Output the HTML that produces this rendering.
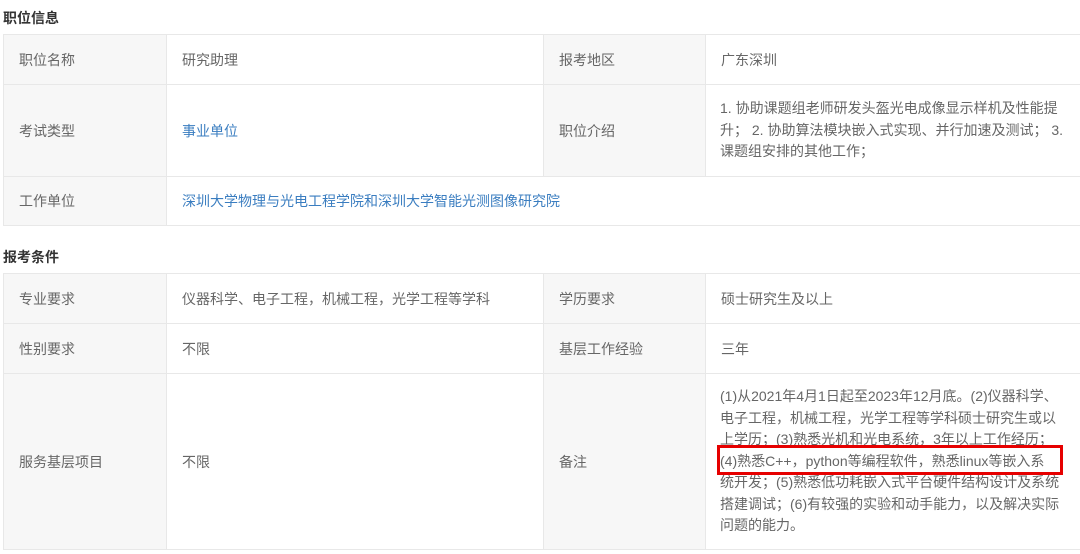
<!DOCTYPE html>
<html><head><meta charset="utf-8"><style>
body{margin:0;background:#fff;font-family:"Liberation Sans","Noto Sans CJK SC",sans-serif;font-size:14px;color:#666;width:1080px;height:554px;overflow:hidden;position:relative}
h3{position:absolute;left:3px;margin:0;font-size:14px;font-weight:bold;color:#333}
table{position:absolute;left:3px;border-collapse:collapse;table-layout:fixed;width:1080px}
td{border:1px solid #e8e8e8;padding:0 0 0 15px;vertical-align:middle}
td.k{background:#f7f7f7}
a{color:#3a7dc0;text-decoration:none}
.n{line-height:21.5px;padding:0 0 0 14px}
.box{position:absolute;left:717px;top:445px;width:340px;height:24px;border:3px solid #e60000}
</style></head><body>
<h3 style="top:8px">职位信息</h3>
<table style="top:34px">
<colgroup><col style="width:163px"><col style="width:377px"><col style="width:162px"><col style="width:378px"></colgroup>
<tr style="height:50px"><td class="k">职位名称</td><td>研究助理</td><td class="k">报考地区</td><td>广东深圳</td></tr>
<tr style="height:92px"><td class="k">考试类型</td><td><a>事业单位</a></td><td class="k">职位介绍</td><td class="n">1. 协助课题组老师研发头盔光电成像显示样机及性能提<br>升； 2. 协助算法模块嵌入式实现、并行加速及测试； 3.<br>课题组安排的其他工作；</td></tr>
<tr style="height:49px"><td class="k">工作单位</td><td colspan="3"><a>深圳大学物理与光电工程学院和深圳大学智能光测图像研究院</a></td></tr>
</table>
<h3 style="top:247px">报考条件</h3>
<table style="top:273px">
<colgroup><col style="width:163px"><col style="width:377px"><col style="width:162px"><col style="width:378px"></colgroup>
<tr style="height:50px"><td class="k">专业要求</td><td>仪器科学、电子工程，机械工程，光学工程等学科</td><td class="k">学历要求</td><td>硕士研究生及以上</td></tr>
<tr style="height:50px"><td class="k">性别要求</td><td>不限</td><td class="k">基层工作经验</td><td>三年</td></tr>
<tr style="height:176px"><td class="k">服务基层项目</td><td>不限</td><td class="k">备注</td><td class="n">(1)从2021年4月1日起至2023年12月底。(2)仪器科学、<br>电子工程，机械工程，光学工程等学科硕士研究生或以<br>上学历；(3)熟悉光机和光电系统，3年以上工作经历；<br>(4)熟悉C++，python等编程软件，熟悉linux等嵌入系<br>统开发；(5)熟悉低功耗嵌入式平台硬件结构设计及系统<br>搭建调试；(6)有较强的实验和动手能力，以及解决实际<br>问题的能力。</td></tr>
</table>
<div class="box"></div>
</body></html>
